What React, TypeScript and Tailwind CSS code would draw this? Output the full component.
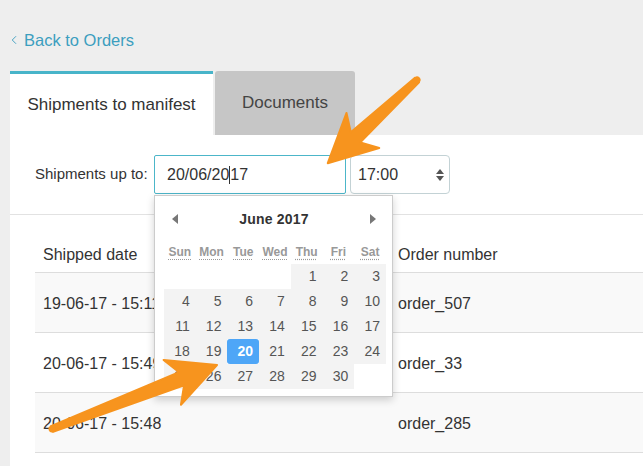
import { ChevronLeft } from 'lucide-react'

const weeks: (number | null)[][] = [
  [null, null, null, null, 1, 2, 3],
  [4, 5, 6, 7, 8, 9, 10],
  [11, 12, 13, 14, 15, 16, 17],
  [18, 19, 20, 21, 22, 23, 24],
  [25, 26, 27, 28, 29, 30, null],
]

const dayNames = ['Sun', 'Mon', 'Tue', 'Wed', 'Thu', 'Fri', 'Sat']

const rows = [
  { date: '19-06-17 - 15:11', order: 'order_507' },
  { date: '20-06-17 - 15:49', order: 'order_33' },
  { date: '20-06-17 - 15:48', order: 'order_285' },
]

function Arrow({ x, y, angle, length }: { x: number; y: number; angle: number; length: number }) {
  const L = length
  const pts = `0,-3 ${L - 38},-7 ${L - 48},-24 ${L},0 ${L - 48},24 ${L - 38},7 0,3`
  return (
    <g transform={`translate(${x} ${y}) rotate(${angle})`}>
      <polygon points={pts} fill="#f7941e" stroke="#f7941e" strokeWidth="2" strokeLinejoin="round" />
      <circle cx="0" cy="0" r="3.5" fill="#f7941e" />
    </g>
  )
}

function Calendar() {
  return (
    <div className="absolute left-0 top-[40px] w-[239px] h-[202px] bg-white border border-[#cccccc] shadow-[0_3px_8px_rgba(0,0,0,0.18)] z-10">
      <div className="mt-[13px] h-[20px] flex items-center justify-between pl-[17px] pr-[16px]">
        <span className="w-0 h-0 border-y-[5px] border-y-transparent border-r-[6px] border-r-[#777]" />
        <span className="text-[14px] font-bold text-[#333] tracking-[0.2px]">June&nbsp;2017</span>
        <span className="w-0 h-0 border-y-[5px] border-y-transparent border-l-[6px] border-l-[#777]" />
      </div>
      <div className="mt-[15px] ml-[9px] w-[222px] grid grid-cols-7 h-[16px] mb-[4px]">
        {dayNames.map(d => (
          <div key={d} className="text-center text-[12px] font-bold text-[#999] leading-[16px]">
            <span className="underline decoration-dotted underline-offset-[3px]">{d}</span>
          </div>
        ))}
      </div>
      <div className="ml-[9px] w-[222px]">
        {weeks.map((w, i) => (
          <div key={i} className="grid grid-cols-7">
            {w.map((d, j) => (
              <div
                key={j}
                className={
                  d === null
                    ? 'h-[25px]'
                    : d === 20
                    ? 'h-[25px] bg-[#4ea6f7] text-white font-bold rounded-[3px] text-right pr-[6px] text-[14px] leading-[24px]'
                    : 'h-[25px] bg-[#f3f3f3] text-[#555] text-right pr-[6px] text-[14px] leading-[24px]'
                }
              >
                {d}
              </div>
            ))}
          </div>
        ))}
      </div>
    </div>
  )
}

export default function App() {
  return (
    <div className="relative w-full min-h-[466px] h-[466px] overflow-hidden bg-[#eeeeee] font-['Liberation_Sans',Arial,sans-serif]">
      {/* back link */}
      <div className="pt-[30px] pl-[7px] h-[50px] flex items-center text-[#3c9ebf] text-[16.5px]">
        <ChevronLeft className="w-[14px] h-[14px] mr-[3px]" strokeWidth={1.6} />
        <span className="leading-[20px]">Back to Orders</span>
      </div>

      {/* tabs */}
      <div className="mt-[21px] pl-[10px] flex gap-[2px]">
        <div className="w-[203px] h-[64px] bg-white border-t-[3px] border-[#48b4c9] flex items-center justify-center text-[17px] text-[#333]">
          Shipments to manifest
        </div>
        <div className="w-[140px] h-[64px] bg-[#c6c6c6] rounded-t-[3px] flex items-center justify-center text-[17px] text-[#444]">
          Documents
        </div>
      </div>

      {/* panel */}
      <div className="ml-[10px] bg-white h-[331px]">
        <div className="h-[80px] border-b border-[#e2e2e2] pt-[20px] pl-[25px] flex items-start">
          <div className="w-[119px] h-[39px] flex items-center text-[15px] text-[#333]">Shipments up to:</div>
          <div className="relative">
            <div className="w-[192px] h-[39px] border border-[#4cb6c9] rounded-[2px] flex items-center pl-[12px] text-[16px] text-[#333]">
              20/06/20<span className="inline-block w-px h-[18px] bg-[#333]" />17
            </div>
            <Calendar />
          </div>
          <div className="ml-[4px] w-[100px] h-[39px] border border-[#c3d2d5] rounded-[4px] flex items-center justify-between pl-[7px] pr-[5px] text-[16px] text-[#333]">
            <span>17:00</span>
            <span className="flex flex-col items-center gap-[2px]">
              <span className="w-0 h-0 border-x-[4px] border-x-transparent border-b-[5px] border-b-[#555]" />
              <span className="w-0 h-0 border-x-[4px] border-x-transparent border-t-[5px] border-t-[#555]" />
            </span>
          </div>
        </div>

        <div className="pl-[25px]">
          <div className="h-[58px] border-b border-[#dddddd] flex items-end pb-[5px] text-[16px] text-[#333]">
            <div className="w-[363px] pl-[8px]">Shipped date</div>
            <div>Order number</div>
          </div>
          {rows.map((r, i) => (
            <div
              key={r.order}
              className={`h-[60px] border-b border-[#dddddd] flex items-center pt-[3px] text-[16px] text-[#333] ${
                i % 2 === 0 ? 'bg-[#f9f9f9]' : 'bg-white'
              }`}
            >
              <div className="w-[363px] pl-[8px]">{r.date}</div>
              <div>{r.order}</div>
            </div>
          ))}
        </div>
      </div>

      {/* annotation arrows */}
      <svg className="absolute inset-0 pointer-events-none z-20" width="643" height="466" viewBox="0 0 643 466">
        <Arrow x={417} y={80} angle={137} length={122} />
        <Arrow x={52} y={429} angle={-21.2} length={177} />
      </svg>
    </div>
  )
}
